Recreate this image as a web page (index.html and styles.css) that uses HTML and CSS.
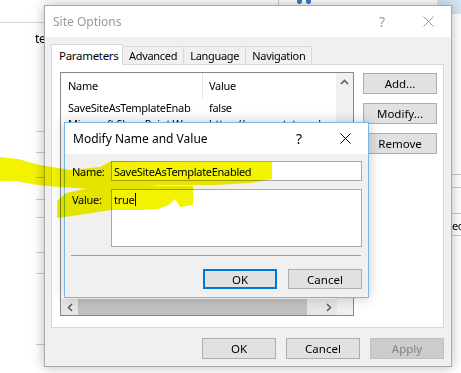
FILE: index.html
```html
<!DOCTYPE html>
<html lang="en">
<head>
    <meta charset="UTF-8">
    <title>Site Options</title>
    <link rel="stylesheet" href="styles.css">
</head>
<body>
<div class="desktop">
    <!-- window in the background -->
    <div class="bg-strip"><span class="bg-dot"></span><span class="bg-dot"></span><span class="bg-glass"></span></div>
    <div class="bg-rule"></div>
    <span class="bg-text">te</span>
    <div class="bg-lines bg-lines-left">
        <div class="gap g1"></div><div class="gap g2"></div><div class="gap g3"></div><div class="gap g4"></div>
        <div class="gap g5"></div><div class="gap g6"></div><div class="gap g7"></div><div class="gap g8"></div>
    </div>
    <div class="bg-lines bg-lines-right">
        <div class="gap r1"></div><div class="gap r2"></div><div class="gap r3"></div>
        <div class="gap r4"><span>ed</span></div>
    </div>

    <!-- Site Options dialog -->
    <div class="dialog site-options">
        <div class="titlebar inactive">
            <span class="title">Site Options</span>
            <span class="tb-help">?</span>
            <span class="tb-close">
                <svg width="11" height="11" viewBox="0 0 11 11"><path d="M0.5 0.5 L10.5 10.5 M10.5 0.5 L0.5 10.5" stroke="currentColor" stroke-width="1"/></svg>
            </span>
        </div>
        <div class="dlg-body">
            <div class="tabs">
                <div class="tab active">Parameters</div>
                <div class="tab">Advanced</div>
                <div class="tab">Language</div>
                <div class="tab">Navigation</div>
            </div>
            <div class="tab-pane">
                <div class="listview">
                    <div class="lv-main">
                        <div class="lv-content">
                            <div class="lv-header">
                                <div class="col-name">Name</div>
                                <div class="col-value">Value</div>
                            </div>
                            <div class="lv-row">
                                <div class="col-name">SaveSiteAsTemplateEnab</div>
                                <div class="col-value">false</div>
                            </div>
                            <div class="lv-row">
                                <div class="col-name">Microsoft SharePoint W</div>
                                <div class="col-value">https://corporatetranel</div>
                            </div>
                        </div>
                        <div class="vscroll">
                            <div class="sb-btn">
                                <svg width="9" height="6" viewBox="0 0 9 6"><path d="M1 5 L4.5 1.5 L8 5" fill="none" stroke="#606060" stroke-width="1.6"/></svg>
                            </div>
                        </div>
                    </div>
                    <div class="hscroll">
                        <div class="sb-btn">
                            <svg width="6" height="9" viewBox="0 0 6 9"><path d="M5 1 L1.5 4.5 L5 8" fill="none" stroke="#606060" stroke-width="1.6"/></svg>
                        </div>
                        <div class="sb-thumb"></div>
                        <div class="sb-track"></div>
                        <div class="sb-btn">
                            <svg width="6" height="9" viewBox="0 0 6 9"><path d="M1 1 L4.5 4.5 L1 8" fill="none" stroke="#606060" stroke-width="1.6"/></svg>
                        </div>
                        <div class="sb-corner"></div>
                    </div>
                </div>
                <div class="side-buttons">
                    <button class="btn">Add...</button>
                    <button class="btn">Modify...</button>
                    <button class="btn">Remove</button>
                </div>
            </div>
            <div class="dlg-buttons">
                <button class="btn">OK</button>
                <button class="btn">Cancel</button>
                <button class="btn" disabled>Apply</button>
            </div>
        </div>
    </div>

    <!-- Modify Name and Value dialog -->
    <div class="dialog modal">
        <div class="titlebar">
            <span class="title">Modify Name and Value</span>
            <span class="tb-help">?</span>
            <span class="tb-close">
                <svg width="11" height="11" viewBox="0 0 11 11"><path d="M0.5 0.5 L10.5 10.5 M10.5 0.5 L0.5 10.5" stroke="currentColor" stroke-width="1"/></svg>
            </span>
        </div>
        <div class="modal-body">
            <div class="field">
                <label class="field-label">Name:</label>
                <div class="input">SaveSiteAsTemplateEnabled</div>
            </div>
            <div class="field">
                <label class="field-label">Value:</label>
                <div class="input textarea">true<span class="caret"></span></div>
            </div>
            <div class="separator"></div>
            <div class="modal-buttons">
                <button class="btn default">OK</button>
                <button class="btn">Cancel</button>
            </div>
        </div>
    </div>

    <!-- highlighter marks -->
    <svg class="highlight" width="461" height="373" viewBox="0 0 461 373">
        <polygon points="0,157 18,159 40,165 70,170 100,167 111,161 200,162 272,162 272,179 250,183 215,185 160,185 120,188 90,189 60,187 38,185 14,181 0,181"/>
        <polygon points="57,201 66,193 90,188 111,186 193,186 193,205 180,207 175,199 169,205 158,209 140,210 111,210 92,213 72,216 57,218"/>
    </svg>
</div>
</body>
</html>
```

FILE: styles.css
```css
* {
    box-sizing: border-box;
}
body {
    margin: 0;
    background-color: #fff;
    font-family: "Noto Sans", "Segoe UI", sans-serif;
    font-size: 11px;
    letter-spacing: -0.3px;
    color: #000;
}
.desktop {
    position: relative;
    width: 461px;
    height: 373px;
    overflow: hidden;
    background-color: #fff;
}

/* background window */
.bg-strip {
    position: absolute;
    left: 278px;
    top: 0;
    width: 183px;
    height: 5px;
    border-left: 1px solid #cfcfcf;
    display: flex;
    gap: 4px;
    padding-left: 18px;
}
.bg-dot {
    width: 5px;
    height: 4px;
    border-radius: 0 0 3px 3px;
    background-color: #3b78c4;
}
.bg-glass {
    margin-left: auto;
    width: 24px;
    height: 14px;
    background-color: #d5e6f6;
}
.bg-rule {
    position: absolute;
    left: 0;
    top: 22px;
    width: 44px;
    height: 1px;
    background-color: #d6d6d6;
}
.bg-text {
    position: absolute;
    left: 35px;
    top: 30px;
    font-size: 12px;
}
.bg-lines {
    position: absolute;
    top: 0;
    display: flex;
    flex-direction: column;
}
.bg-lines-left {
    left: 36px;
    width: 8px;
}
.bg-lines-right {
    left: 452px;
    width: 9px;
}
.gap {
    border-bottom: 1px solid #c5cad2;
}
.g1 { height: 132px; }
.g2 { height: 21px; }
.g3 { height: 25px; }
.g4 { height: 22px; }
.g5 { height: 18px; }
.g6 { height: 35px; }
.g7 { height: 21px; }
.g8 { height: 71px; }
.r1 { height: 175px; }
.r2 { height: 13px; }
.r3 { height: 26px; }
.r4 {
    height: 22px;
    font-size: 11px;
    letter-spacing: -0.5px;
    padding-top: 4px;
    white-space: nowrap;
}

/* dialogs */
.dialog {
    position: absolute;
    background-color: #f0f0f0;
}
.site-options {
    left: 44px;
    top: 5px;
    width: 408px;
    border: 1px solid #a9a9a9;
    box-shadow: 0 0 12px rgba(0, 0, 0, 0.28);
}
.modal {
    left: 64px;
    top: 122px;
    width: 305px;
    border: 1px solid #7fb4e8;
    box-shadow: 0 0 12px rgba(0, 0, 0, 0.22);
}
.titlebar {
    height: 31px;
    background-color: #fff;
    display: flex;
    align-items: center;
    padding-left: 8px;
    font-size: 12px;
    letter-spacing: 0;
}
.titlebar.inactive {
    color: #999;
}
.title {
    flex: 1;
}
.tb-help {
    font-size: 14px;
    width: 46px;
    text-align: center;
}
.tb-close {
    width: 46px;
    display: flex;
    justify-content: center;
}
.dlg-body {
    padding: 7px 7px 7px 6px;
}

/* tabs */
.tabs {
    display: flex;
    height: 20px;
    align-items: flex-end;
}
.tab {
    height: 18px;
    padding: 0 6px;
    border: 1px solid #d9d9d9;
    border-bottom: none;
    margin-left: -1px;
    display: flex;
    align-items: center;
    background-color: #f0f0f0;
}
.tab.active {
    height: 21px;
    margin-left: 0;
    margin-bottom: -1px;
    padding: 0 7px;
    background-color: #fff;
    position: relative;
    z-index: 1;
    width: 72px;
    font-size: 11.5px;
}
.tab-pane {
    height: 264px;
    background-color: #fff;
    border: 1px solid #d9d9d9;
    padding: 7px 0 0 8px;
    display: flex;
    gap: 9px;
}

/* list view */
.listview {
    width: 294px;
    height: 244px;
    border: 1px solid #828790;
    display: flex;
    flex-direction: column;
}
.lv-main {
    flex: 1;
    display: flex;
    min-height: 0;
}
.lv-content {
    flex: 1;
    overflow: hidden;
}
.lv-header {
    display: flex;
    height: 25px;
    align-items: center;
    margin-bottom: 1px;
}
.lv-header .col-name {
    border-right: 1px solid #e5e5e5;
    height: 25px;
    display: flex;
    align-items: center;
}
.lv-row {
    display: flex;
    height: 16px;
    align-items: center;
}
.col-name {
    width: 142px;
    padding-left: 7px;
    white-space: nowrap;
    overflow: hidden;
}
.col-value {
    padding-left: 6px;
    white-space: nowrap;
}
.vscroll {
    width: 17px;
    background-color: #f0f0f0;
}
.sb-btn {
    width: 17px;
    height: 17px;
    display: flex;
    align-items: center;
    justify-content: center;
    background-color: #f0f0f0;
}
.hscroll {
    height: 16px;
    display: flex;
    background-color: #f0f0f0;
}
.hscroll .sb-btn {
    height: 16px;
    background-color: #e6e6e6;
}
.sb-thumb {
    width: 229px;
    background-color: #c1c1c1;
}
.sb-track {
    flex: 1;
    background-color: #e6e6e6;
}
.sb-corner {
    width: 16px;
    background-color: #f0f0f0;
}

/* buttons */
.side-buttons {
    display: flex;
    flex-direction: column;
    gap: 9px;
    padding-top: 1px;
}
.btn {
    width: 74px;
    height: 21px;
    border: 1px solid #adadad;
    background-color: #e1e1e1;
    font-family: inherit;
    font-size: 11.5px;
    letter-spacing: 0;
    color: #000;
    padding: 0;
}
.btn:disabled {
    background-color: #cccccc;
    border-color: #bfbfbf;
    color: #838383;
}
.btn.default {
    border: 2px solid #0078d7;
}
.dlg-buttons {
    display: flex;
    justify-content: flex-end;
    gap: 10px;
    margin-top: 10px;
}

/* modify dialog */
.modal-body {
    padding: 7px 6px 8px 6px;
}
.field {
    display: flex;
    margin-bottom: 8px;
}
.field-label {
    width: 40px;
    padding-top: 3px;
    padding-left: 1px;
}
.input {
    flex: 1;
    height: 20px;
    background-color: #fff;
    border: 1px solid #a8a8a8;
    padding: 2px 2px;
    white-space: nowrap;
}
.input.textarea {
    height: 58px;
}
.caret {
    display: inline-block;
    width: 1px;
    height: 13px;
    background-color: #000;
    vertical-align: -2px;
    margin-left: 1px;
}
.separator {
    height: 1px;
    margin: 0 1px 0 0;
    background-color: #a0a0a0;
}
.modal-buttons {
    display: flex;
    justify-content: flex-end;
    gap: 11px;
    margin-top: 13px;
}
.modal-buttons .btn {
    height: 20px;
}

/* highlighter */
.highlight {
    position: absolute;
    left: 0;
    top: 0;
    pointer-events: none;
    mix-blend-mode: multiply;
    fill: #f3f300;
}
```
